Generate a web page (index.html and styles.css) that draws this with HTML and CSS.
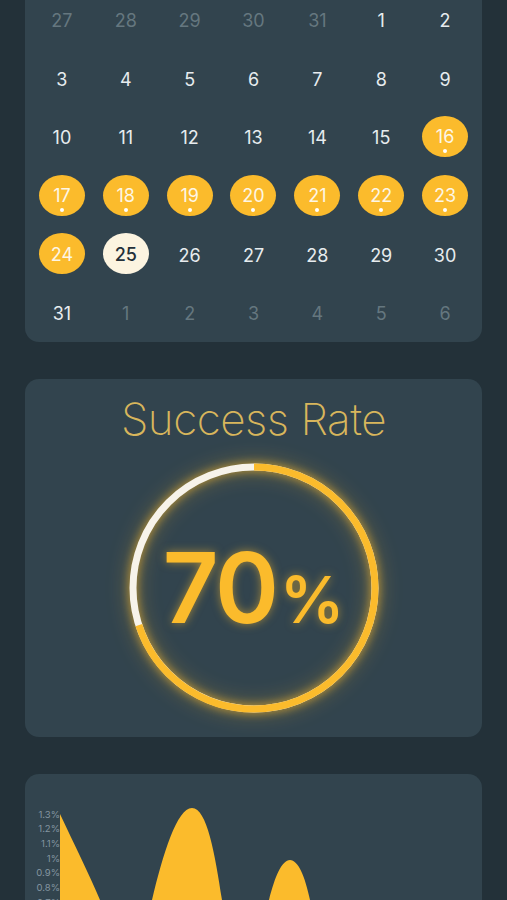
FILE: index.html
```html
<!DOCTYPE html>
<html lang="en">
<head>
<meta charset="utf-8">
<title>Stats</title>
<link rel="stylesheet" href="styles.css">
</head>
<body>
<main class="page">
  <section class="card calendar">
    <div class="grid">
      <span class="day muted">27</span><span class="day muted">28</span><span class="day muted">29</span><span class="day muted">30</span><span class="day muted">31</span><span class="day">1</span><span class="day">2</span>
      <span class="day">3</span><span class="day">4</span><span class="day">5</span><span class="day">6</span><span class="day">7</span><span class="day">8</span><span class="day">9</span>
      <span class="day">10</span><span class="day">11</span><span class="day">12</span><span class="day">13</span><span class="day">14</span><span class="day">15</span><span class="day"><span class="pill done">16</span></span>
      <span class="day"><span class="pill done">17</span></span><span class="day"><span class="pill done">18</span></span><span class="day"><span class="pill done">19</span></span><span class="day"><span class="pill done">20</span></span><span class="day"><span class="pill done">21</span></span><span class="day"><span class="pill done">22</span></span><span class="day"><span class="pill done">23</span></span>
      <span class="day"><span class="pill plain">24</span></span><span class="day"><span class="pill today">25</span></span><span class="day">26</span><span class="day">27</span><span class="day">28</span><span class="day">29</span><span class="day">30</span>
      <span class="day">31</span><span class="day muted">1</span><span class="day muted">2</span><span class="day muted">3</span><span class="day muted">4</span><span class="day muted">5</span><span class="day muted">6</span>
    </div>
  </section>

  <section class="card success">
    <h2 class="title">Success Rate</h2>
    <div class="ring-wrap">
      <svg class="ring" width="250" height="250" viewBox="0 0 250 250">
        <circle cx="125" cy="125" r="121" fill="none" stroke="#f7f3ea" stroke-width="7"/>
        <circle cx="125" cy="125" r="121" fill="none" stroke="#fbbb2c" stroke-width="7"
          stroke-dasharray="532.2 760.3" transform="rotate(-90 125 125)"/>
      </svg>
      <div class="value"><span class="num">70</span><span class="pct">%</span></div>
    </div>
  </section>

  <section class="card chart">
    <div class="axis">
      <span>1.3%</span><span>1.2%</span><span>1.1%</span><span>1%</span><span>0.9%</span><span>0.8%</span><span>0.7%</span>
    </div>
    <svg class="plot" width="410" height="200" viewBox="0 0 410 200">
      <path fill="#fbbb2c" d="M0,0 C14,30 30,62 40,86 C52,112 62,160 70,200 L80,200 C84,150 87,110 92,86 C103,40 117,-6 132,-6 C147,-6 155,40 162,86 C167,120 172,170 178,200 L200,200 C203,140 205,110 209,86 C215,62 222,46 230,46 C238,46 245,62 250,86 C255,110 258,150 262,200 L410,200 L0,200 Z"/>
    </svg>
  </section>
</main>
</body>
</html>
```

FILE: styles.css
```css
* { box-sizing: border-box; }
html, body {
  margin: 0;
  padding: 0;
  background: #233139;
  overflow: hidden;
}
body {
  font-family: Inter, "Noto Sans", "Liberation Sans", sans-serif;
  color: #e7ecee;
}
.page {
  width: 507px;
  padding: 0 25px;
  display: flex;
  flex-direction: column;
  gap: 37px;
}
.card {
  background: #32444e;
  border-radius: 14px;
}
.calendar {
  margin-top: -10px;
  border-radius: 0 0 14px 14px;
  padding: 0 5px;
}
.grid {
  display: grid;
  grid-template-columns: repeat(7, 1fr);
  grid-auto-rows: 58.6px;
}
.day {
  display: flex;
  align-items: center;
  justify-content: center;
  font-size: 18px;
  font-weight: 400;
  color: #e7ecee;
  padding-top: 3px;
}
.day.muted { color: #65777f; }
.pill {
  position: relative;
  width: 46px;
  height: 41px;
  margin-top: -3px;
  padding-top: 1px;
  border-radius: 50%;
  display: flex;
  align-items: center;
  justify-content: center;
  background: #fbbb2c;
  color: #fdf6e6;
}
.pill.done::after {
  content: "";
  position: absolute;
  left: 50%;
  bottom: 4px;
  width: 4px;
  height: 4px;
  margin-left: -2px;
  border-radius: 50%;
  background: #ffffff;
}
.pill.today {
  background: #fcf4e0;
  color: #243039;
  font-weight: 500;
}
.success {
  height: 358px;
  padding-top: 14px;
  display: flex;
  flex-direction: column;
  align-items: center;
}
.title {
  margin: 0;
  font-size: 44px;
  line-height: 52px;
  font-weight: 200;
  color: #d8b65c;
  letter-spacing: -0.5px;
}
.ring-wrap {
  position: relative;
  margin-top: 18px;
  width: 250px;
  height: 250px;
}
.ring {
  display: block;
  filter: drop-shadow(0 0 5px rgba(251, 187, 44, 0.75)) drop-shadow(0 0 10px rgba(251, 187, 44, 0.35));
}
.value {
  position: absolute;
  inset: 0;
  display: flex;
  align-items: baseline;
  justify-content: center;
  padding-top: 75px;
  color: #fbbb2c;
  font-weight: 600;
  text-shadow: 0 0 10px rgba(251, 187, 44, 0.55);
}
.num {
  font-size: 97px;
  line-height: 100px;
  letter-spacing: -2px;
}
.pct {
  font-size: 64px;
  line-height: 64px;
  margin-left: 3px;
}
.chart {
  height: 300px;
  padding-top: 34px;
  display: flex;
  align-items: flex-start;
}
.axis {
  width: 35px;
  display: flex;
  flex-direction: column;
  align-items: flex-end;
  font-size: 9.5px;
  line-height: 14.7px;
  color: #8495a0;
}
.plot {
  display: block;
  margin-top: 6px;
  overflow: visible;
}
```
